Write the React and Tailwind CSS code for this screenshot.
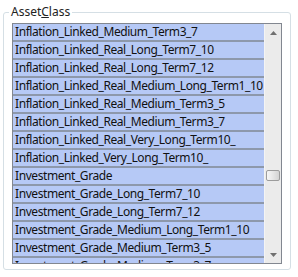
import React from "react";

const items = [
  "Inflation_Linked_Medium_Term3_7",
  "Inflation_Linked_Real_Long_Term7_10",
  "Inflation_Linked_Real_Long_Term7_12",
  "Inflation_Linked_Real_Medium_Long_Term1_10",
  "Inflation_Linked_Real_Medium_Term3_5",
  "Inflation_Linked_Real_Medium_Term3_7",
  "Inflation_Linked_Real_Very_Long_Term10_",
  "Inflation_Linked_Very_Long_Term10_",
  "Investment_Grade",
  "Investment_Grade_Long_Term7_10",
  "Investment_Grade_Long_Term7_12",
  "Investment_Grade_Medium_Long_Term1_10",
  "Investment_Grade_Medium_Term3_5",
  "Investment_Grade_Medium_Term3_7",
];

export default function App() {
  return (
    <div
      className="w-[298px] h-[277px] bg-white pt-[4px] pl-[3px] overflow-hidden"
      style={{ fontFamily: '"Noto Sans", "Open Sans", sans-serif' }}
    >
      <fieldset className="w-[288px] h-[266px] border border-[#d5dfe5] rounded-[3px] pl-[8px]">
        <legend className="ml-[-3px] px-[2px] text-[12px] leading-[16px] text-[#222]">
          Asset<span className="underline">C</span>lass
        </legend>
        <div className="mt-[3px] w-[270px] h-[241px] border border-[#828790] flex overflow-hidden">
          <div className="w-[251px] flex flex-col overflow-hidden">
            {items.map((t) => (
              <div
                key={t}
                className="h-[18px] shrink-0 bg-[#b6c9f6] border-b-2 border-[#8d98ab] pl-[2px] text-[12px] tracking-[-0.42px] leading-[16px] text-[#111] whitespace-nowrap overflow-hidden"
              >
                {t}
              </div>
            ))}
          </div>
          <div className="w-[17px] bg-[#ebebeb] border-l border-[#f4f4f4] flex flex-col items-center">
            <div className="h-[17px] w-full flex items-center justify-center">
              <svg width="7" height="4" viewBox="0 0 7 4">
                <path d="M0 4 L3.5 0 L7 4 Z" fill="#707070" />
              </svg>
            </div>
            <div className="h-[129px] shrink-0" />
            <div className="w-[14px] h-[11px] border border-[#9c9c9c] rounded-[2px] bg-gradient-to-r from-[#f6f6f6] via-[#e6e6e6] to-[#d3d3d3]" />
            <div className="flex-1" />
            <div className="h-[17px] w-full flex items-center justify-center">
              <svg width="7" height="4" viewBox="0 0 7 4">
                <path d="M0 0 L3.5 4 L7 0 Z" fill="#707070" />
              </svg>
            </div>
          </div>
        </div>
      </fieldset>
    </div>
  );
}
